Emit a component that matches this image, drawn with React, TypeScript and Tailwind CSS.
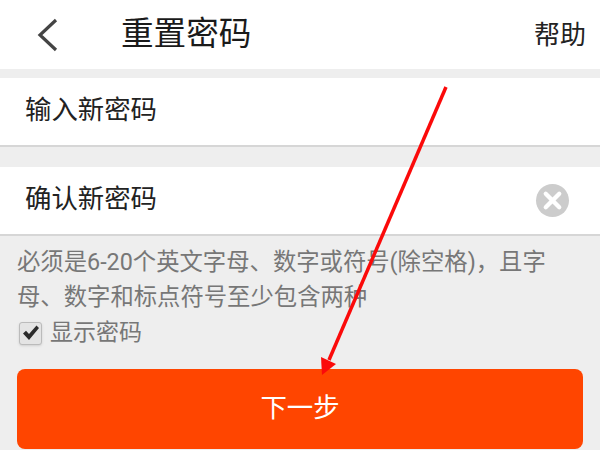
import React from 'react';
import { X } from 'lucide-react';

const font = "font-['Roboto','Noto_Sans_CJK_SC',sans-serif]";

function PasswordRow({ label, clearable }: { label: string; clearable?: boolean }) {
  return (
    <div className="flex h-[69px] items-center justify-between border-b-2 border-[#d6d6d6] bg-white pl-[25px] pr-[31px]">
      <span className="pb-[2px] text-[26.4px] leading-none text-[#222]">{label}</span>
      {clearable && (
        <span className="flex h-[33px] w-[33px] items-center justify-center rounded-full bg-[#cccccc]">
          <X className="h-[27px] w-[27px] text-white" strokeWidth={3.8} />
        </span>
      )}
    </div>
  );
}

export default function App() {
  return (
    <div className={`${font} relative h-[450px] w-[600px] overflow-hidden bg-[#eeeeee]`}>
      <header className="flex h-[69px] items-center bg-white pr-[14px]">
        <svg className="ml-[36px] h-[34px] w-[24px] text-[#444]" viewBox="0 0 24 34" fill="none">
          <polyline points="20,2 4,17 20,32" stroke="currentColor" strokeWidth="3.2" />
        </svg>
        <h1 className="ml-[61px] text-[32.6px] font-normal leading-none text-[#1a1a1a]">重置密码</h1>
        <span className="ml-auto text-[26px] leading-none text-[#222]">帮助</span>
      </header>

      <div className="mt-[9px]">
        <PasswordRow label="输入新密码" />
      </div>
      <div className="mt-[20px]">
        <PasswordRow label="确认新密码" clearable />
      </div>

      <div className="px-[17px] pt-[9px]">
        <p className="text-[23.35px] leading-[35px] text-[#777]">
          必须是6-20个英文字母、数字或符号(除空格)，且字母、数字和标点符号至少包含两种
        </p>
        <label className="flex h-[36px] items-center gap-[8px] pl-[2px]">
          <span className="flex h-[23px] w-[23px] items-center justify-center rounded-[3px] border border-[#bbb] bg-[#e4e4e4] shadow-sm">
            <svg className="h-[18px] w-[18px] text-[#2b2b2b]" viewBox="0 0 18 18" fill="currentColor">
              <path d="M1 9.5 L4 6.8 L7 10 L14.5 1.5 L17 4 L7 16 Z" />
            </svg>
          </span>
          <span className="pb-[2px] text-[23px] leading-none text-[#777]">显示密码</span>
        </label>
        <button className="mt-[18px] flex h-[80px] w-full items-center justify-center rounded-[8px] bg-[#ff4500] text-[26.4px] text-white">
          下一步
        </button>
      </div>

      <svg className="absolute left-0 top-0 h-[450px] w-[600px]" viewBox="0 0 600 450">
        <line x1="446" y1="87" x2="329" y2="360" stroke="#fb0a0a" strokeWidth="3.5" />
        <polygon points="322,375 321,357 336,364" fill="#fb0a0a" />
      </svg>
    </div>
  );
}
